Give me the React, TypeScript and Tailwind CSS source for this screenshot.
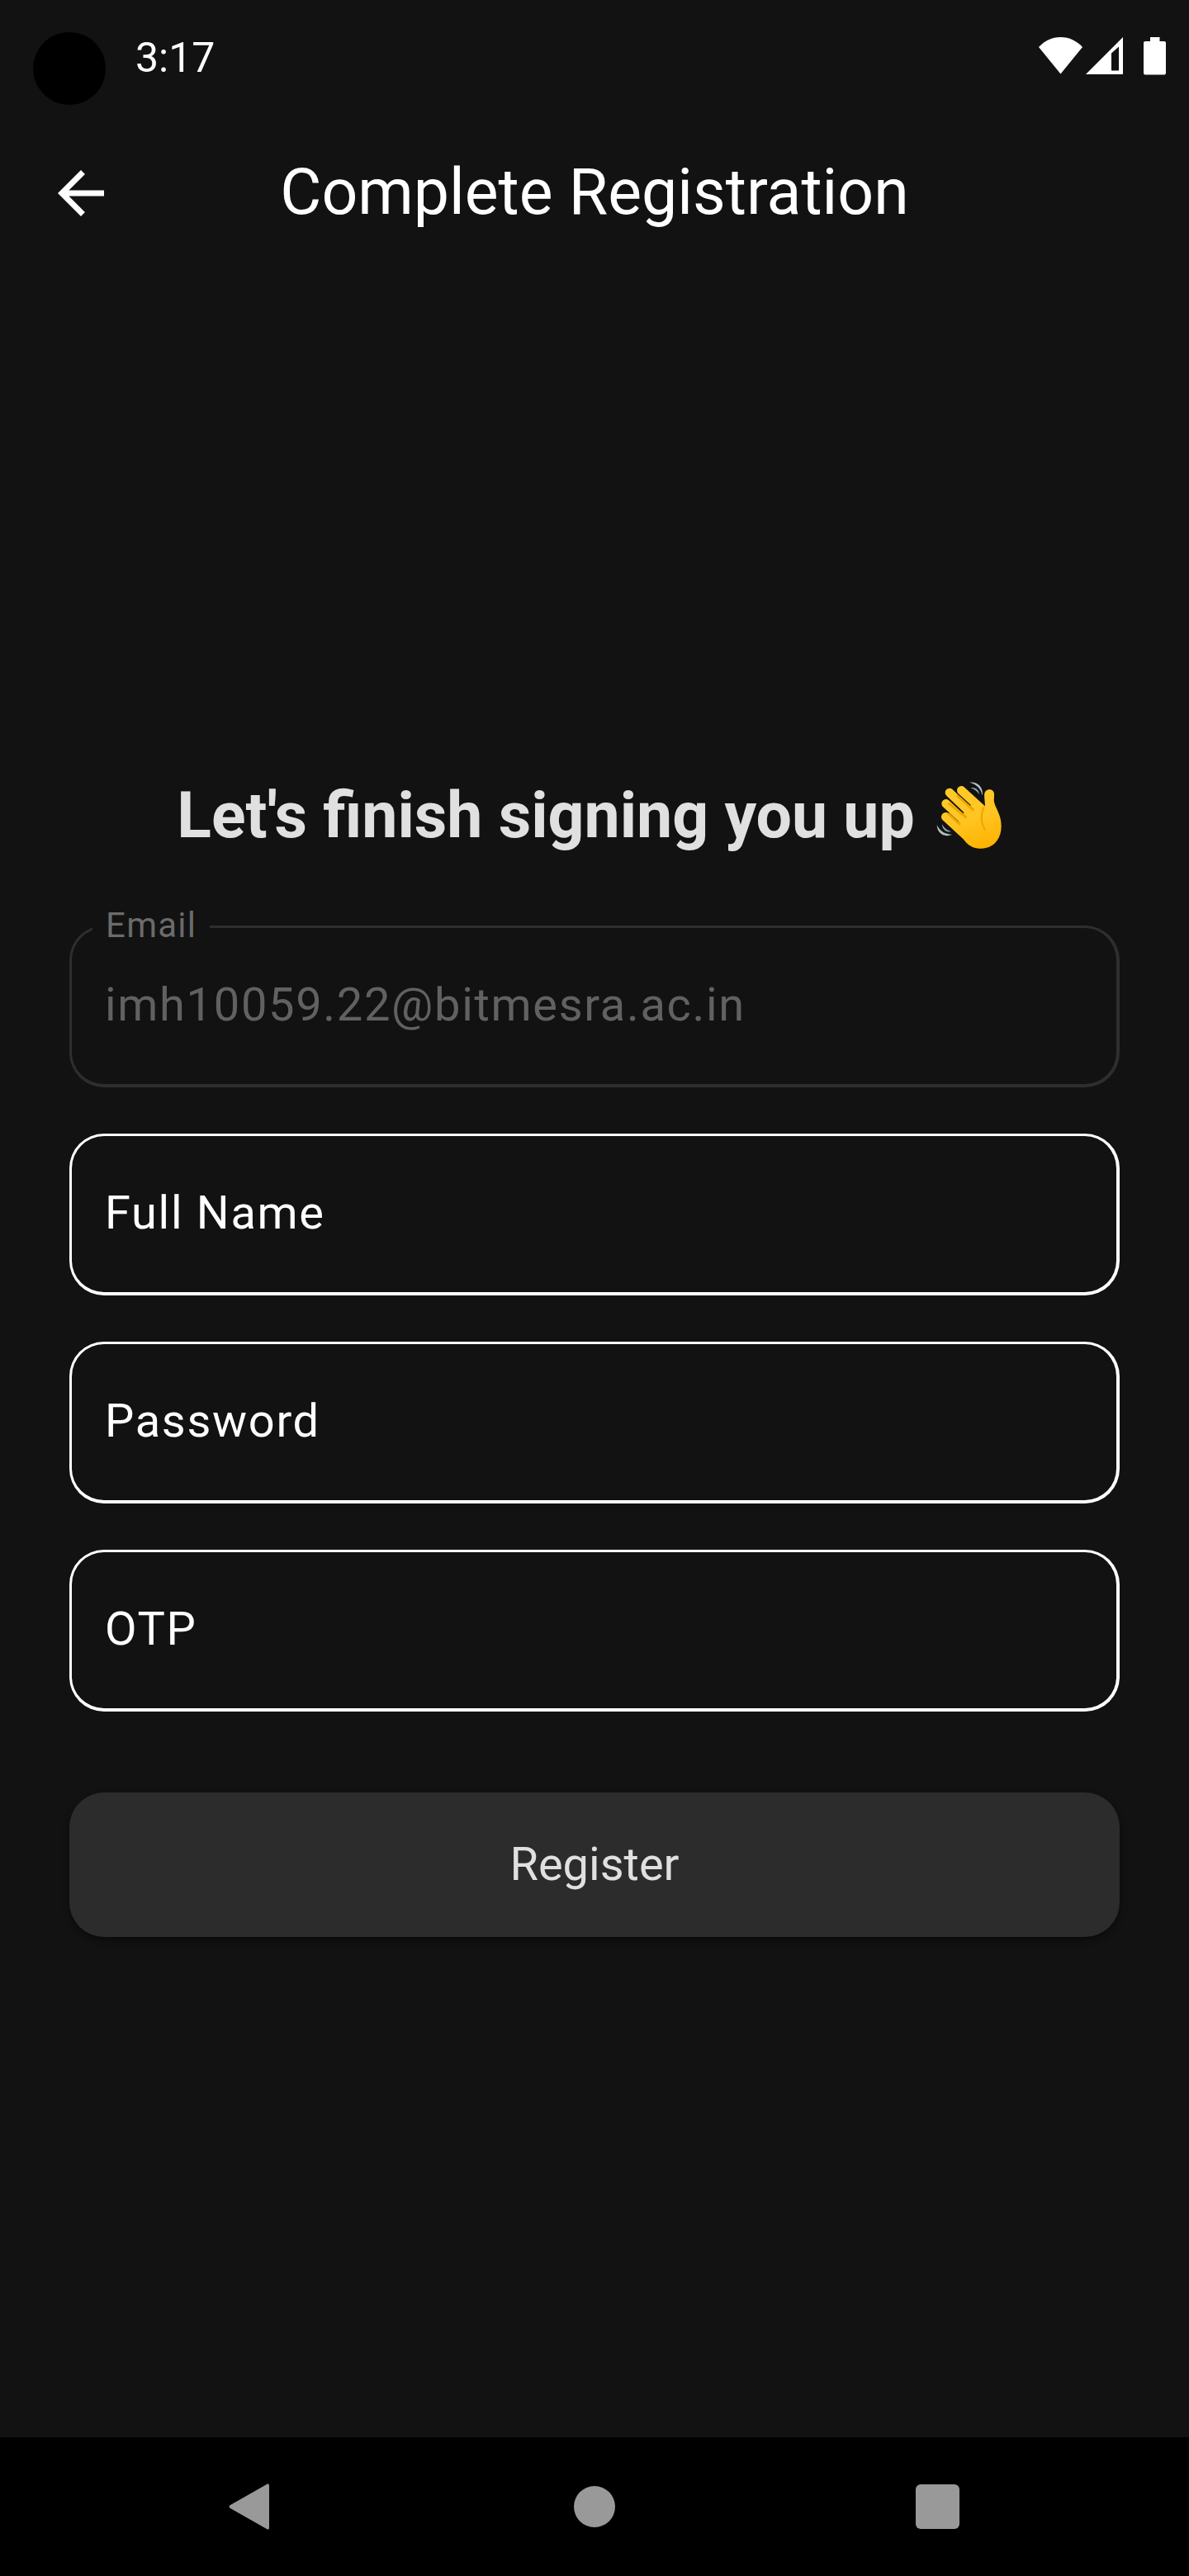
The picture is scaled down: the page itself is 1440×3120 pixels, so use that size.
import { useState } from "react";

type FieldProps = {
  id: string;
  label: string;
  type?: string;
  value: string;
  onChange: (value: string) => void;
};

function Field({ id, label, type = "text", value, onChange }: FieldProps) {
  return (
    <div className="grid w-full grid-cols-1 items-center">
      <input
        id={id}
        type={type}
        value={value}
        onChange={(e) => onChange(e.target.value)}
        className="col-start-1 row-start-1 h-[196px] w-full rounded-[42px] border-3 border-r-4 border-b-4 border-white bg-transparent px-10 pb-1 text-[56px] tracking-[0.03em] text-white outline-none"
      />
      {value === "" && (
        <label
          htmlFor={id}
          className="pointer-events-none col-start-1 row-start-1 px-[43px] pb-1 text-[56px] leading-[72px] tracking-[0.03em] text-white"
        >
          {label}
        </label>
      )}
    </div>
  );
}

function StatusBar() {
  return (
    <div className="flex h-[122px] items-start justify-between pr-7 pl-10">
      <div className="flex items-start gap-9">
        <span className="mt-[39px] size-[88px] rounded-full bg-black" />
        <span className="mt-10 text-[50px] leading-[60px] text-white">3:17</span>
      </div>
      <div className="mt-[45px] flex items-start text-white">
        <svg width="53" height="45" viewBox="0 0 53 45" fill="currentColor" aria-hidden="true">
          <path d="M26.5 44.5 0 12C7 4.500 16 0 26.500 0S46 4.500 53 12Z" />
        </svg>
        <svg width="46" height="45" viewBox="0 0 46 45" className="ml-1" fill="currentColor" aria-hidden="true">
          <path fillRule="evenodd" d="M45 0V45H0ZM31 19.500V40.500H40V11.500Z" />
        </svg>
        <svg width="27" height="46" viewBox="0 0 27 46" className="ml-6" fill="currentColor" aria-hidden="true">
          <path d="M8 0H19.500V5H25Q27 5 27 7V43.500Q27 45.500 25 45.500H2Q0 45.500 0 43.500V7Q0 5 2 5H8Z" />
        </svg>
      </div>
    </div>
  );
}

function WavingHand() {
  return (
    <svg width="98" height="98" viewBox="57 57 294 294" fill="none" strokeLinecap="round" role="img" aria-label="Waving hand">
      <defs>
        <linearGradient id="skin" gradientUnits="userSpaceOnUse" x1="180" y1="110" x2="240" y2="320">
          <stop offset="0" stopColor="#FFCA28" />
          <stop offset="0.5" stopColor="#FFC421" />
          <stop offset="1" stopColor="#FFB300" />
        </linearGradient>
      </defs>
      <g stroke="url(#skin)" strokeWidth="32">
        <path d="M109 208 200 292" />
        <path d="M110 160 220 262" />
        <path d="M123 120 240 232" />
        <path d="M166 112 262 200" />
      </g>
      <path
        fill="url(#skin)"
        d="M252 168C252 152 248 136 250 124C253 104 283 103 285 124C286 134 283 144 285 154C289 176 311 200 311 242C311 290 281 323 238 323C212 323 198 315 184 302L150 260L160 210L215 150L248 172Z"
      />
      <g stroke="#EDA600">
        <path strokeWidth="9" d="M152 132 208 182" />
        <path strokeWidth="9" d="M122 160 182 209" />
        <path strokeWidth="9" d="M120 198 159 234" />
        <path strokeWidth="6" d="M247 174C236 200 236 228 251 254" />
      </g>
      <path fill="#B0BEC5" d="M196 83C224 78 248 102 242 131C238 106 222 90 196 83Z" />
      <path fill="#90A4AE" d="M199 103C216 98 232 110 230 127C223 114 213 107 199 103Z" />
      <path fill="#B0BEC5" d="M77 238C78 268 104 285 132 272C107 272 88 260 77 238Z" />
      <path fill="#90A4AE" d="M96 235C96 254 112 267 129 261C114 258 104 249 96 235Z" />
    </svg>
  );
}

export default function App() {
  const [name, setName] = useState("");
  const [password, setPassword] = useState("");
  const [otp, setOtp] = useState("");

  return (
    <div className="flex min-h-screen flex-col bg-[#121212] font-[Roboto,sans-serif]">
      <StatusBar />

      <header className="grid h-[224px] grid-cols-[84px_1fr_84px] items-center px-14">
        <button type="button" aria-label="Back" className="text-white">
          <svg width="84" height="84" viewBox="0 0 24 24" fill="currentColor" aria-hidden="true">
            <path d="M20 11H7.830l5.590-5.590L12 4l-8 8 8 8 1.410-1.410L7.830 13H20v-2z" />
          </svg>
        </button>
        <h1 className="pb-0.5 text-center text-[77px] leading-[98px] text-white">Complete Registration</h1>
      </header>

      <main className="flex flex-1 flex-col justify-center px-[84px] pb-[13px]">
        <form className="flex flex-col" onSubmit={(e) => e.preventDefault()}>
          <h2 className="flex items-center justify-center gap-5 text-[77px] leading-[98px] font-bold text-[#e0e0e0]">
            Let's finish signing you up
            <WavingHand />
          </h2>

          <div className="mt-[84px] flex flex-col gap-14">
            <div className="relative w-full">
              <label
                htmlFor="email"
                className="absolute -top-6 left-7 bg-[#121212] px-4 text-[42px] leading-[48px] tracking-[0.03em] text-[#6b6b6b]"
              >
                Email
              </label>
              <input
                id="email"
                type="email"
                disabled
                value="imh10059.22@bitmesra.ac.in"
                className="block h-[196px] w-full rounded-[42px] border-3 border-r-4 border-b-4 border-[#2e2e2e] bg-transparent px-10 pb-1 text-[56px] tracking-[0.03em] text-[#616161]"
              />
            </div>
            <Field id="full-name" label="Full Name" value={name} onChange={setName} />
            <Field id="password" label="Password" type="password" value={password} onChange={setPassword} />
            <Field id="otp" label="OTP" value={otp} onChange={setOtp} />
          </div>

          <button
            type="submit"
            className="mt-[98px] h-[175px] w-full rounded-[42px] bg-[#2c2c2c] pb-0.5 text-[56px] text-[#e0e0e0] shadow-[0_4px_8px_rgba(0,0,0,0.4)]"
          >
            Register
          </button>
        </form>
      </main>

      <nav className="grid h-[168px] grid-cols-3 items-center justify-items-center bg-black px-24 text-[#999999]">
        <button type="button" aria-label="Back">
          <svg width="56" height="56" viewBox="0 0 56 56" fill="currentColor" aria-hidden="true">
            <path d="M50 3V53Q50 57 47 55L3 30Q0 28 3 26L47 1Q50-1 50 3Z" />
          </svg>
        </button>
        <button type="button" aria-label="Home">
          <svg width="56" height="56" viewBox="0 0 56 56" fill="currentColor" aria-hidden="true">
            <circle cx="28" cy="28" r="25" />
          </svg>
        </button>
        <button type="button" aria-label="Recent apps">
          <svg width="56" height="56" viewBox="0 0 56 56" fill="currentColor" aria-hidden="true">
            <rect x="1" y="1" width="53" height="54" rx="6" />
          </svg>
        </button>
      </nav>
    </div>
  );
}
